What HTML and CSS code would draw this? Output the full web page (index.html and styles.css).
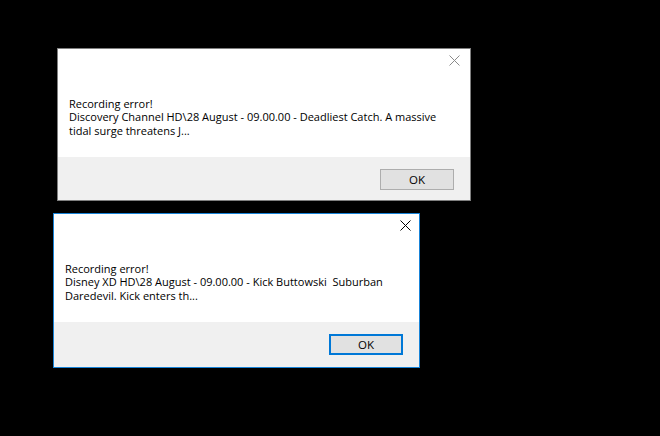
FILE: index.html
```html
<!DOCTYPE html>
<html>
<head>
<meta charset="utf-8">
<link rel="stylesheet" href="styles.css">
</head>
<body>
<div class="desktop">
  <div class="dialog dialog-inactive d1">
    <div class="close">
      <svg width="11" height="11" viewBox="0 0 11 11"><path d="M0.5 0.5 L10.5 10.5 M10.5 0.5 L0.5 10.5" /></svg>
    </div>
    <div class="msg">
      <p>Recording error!<br>Discovery Channel HD\28 August - 09.00.00 - Deadliest Catch. A massive<br>tidal surge threatens J...</p>
    </div>
    <div class="footer">
      <button class="btn">OK</button>
    </div>
  </div>
  <div class="dialog dialog-active d2">
    <div class="close">
      <svg width="11" height="11" viewBox="0 0 11 11"><path d="M0.5 0.5 L10.5 10.5 M10.5 0.5 L0.5 10.5" /></svg>
    </div>
    <div class="msg">
      <p>Recording error!<br>Disney XD HD\28 August - 09.00.00 - Kick Buttowski&nbsp; Suburban<br>Daredevil. Kick enters th...</p>
    </div>
    <div class="footer">
      <button class="btn btn-default">OK</button>
    </div>
  </div>
</div>
</body>
</html>
```

FILE: styles.css
```css
html, body {
  margin: 0;
  padding: 0;
  background: #000;
}
.desktop {
  position: relative;
  width: 660px;
  height: 436px;
  background: #000;
  font-family: "Open Sans", "Noto Sans", sans-serif;
  font-size: 11px;
  color: #000;
}
.dialog {
  position: absolute;
  box-sizing: border-box;
  display: flex;
  flex-direction: column;
  background: #fff;
}
.dialog-inactive {
  border: 1px solid #7f7f7f;
}
.dialog-active {
  border: 1px solid #1883d7;
}
.d1 {
  left: 57px;
  top: 48px;
  width: 414px;
  height: 153px;
}
.d2 {
  left: 53px;
  top: 213px;
  width: 367px;
  height: 155px;
}
.close {
  position: absolute;
  top: 6px;
  right: 10px;
  width: 11px;
  height: 11px;
}
.d2 .close {
  right: 8px;
}
.close svg {
  display: block;
}
.close path {
  fill: none;
  stroke-width: 1;
}
.dialog-inactive .close path {
  stroke: #8a8a8a;
}
.dialog-active .close path {
  stroke: #000;
}
.msg {
  height: 108px;
  box-sizing: border-box;
  padding: 48px 0 0 11px;
}
.msg p {
  margin: 0;
  line-height: 13.3px;
  white-space: nowrap;
}
.footer {
  flex: 1;
  background: #f0f0f0;
  display: flex;
  justify-content: flex-end;
  align-items: flex-start;
  padding: 12px 16px 0 0;
}
.btn {
  box-sizing: border-box;
  width: 74px;
  height: 21px;
  margin: 0;
  padding: 0;
  background: #e1e1e1;
  border: 1px solid #adadad;
  border-radius: 0;
  font-family: "Open Sans", "Noto Sans", sans-serif;
  font-size: 11.5px;
  color: #000;
  line-height: 19px;
}
.btn-default {
  border: 2px solid #0078d7;
  line-height: 17px;
}
```
